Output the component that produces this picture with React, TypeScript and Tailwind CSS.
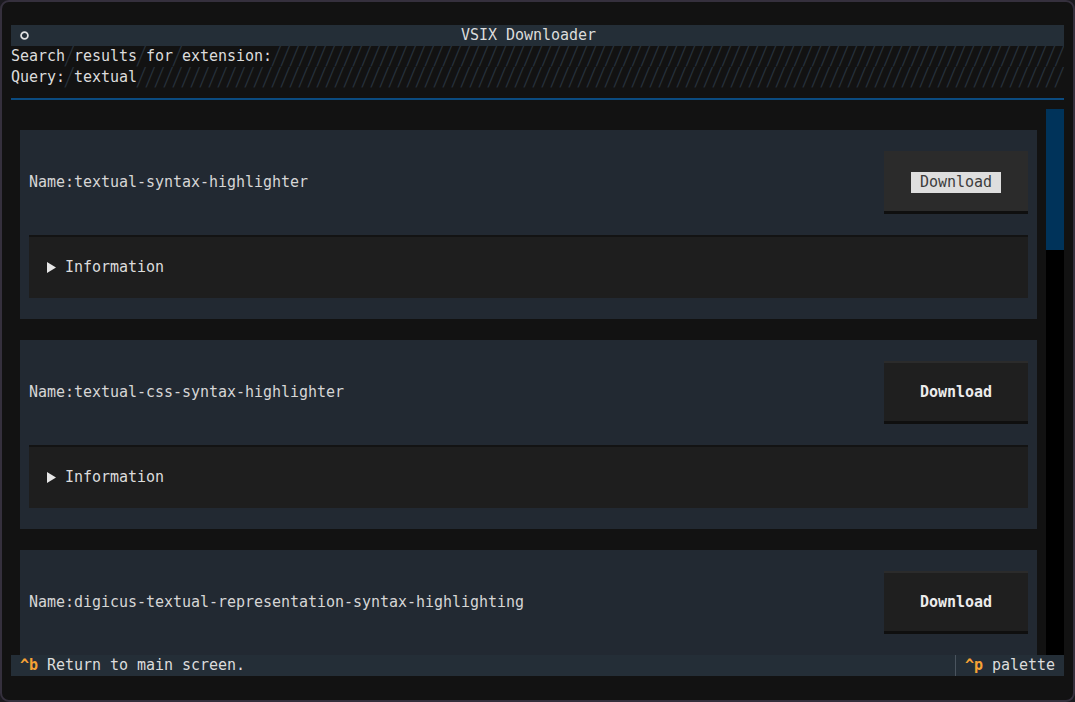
import React from 'react';

const COLS = 117;

function Slash({ count }: { count: number }) {
  return (
    <span className="inline-block origin-center scale-y-[1.25] text-[#27313b]">{'╱'.repeat(count)}</span>
  );
}

function HatchRow({ text }: { text: string }) {
  const words = text.split(' ');
  return (
    <div className="flex h-[21px] items-center overflow-hidden whitespace-pre">
      {words.map((w, i) => (
        <React.Fragment key={i}>
          {i > 0 && <Slash count={1} />}
          <span className="text-[#dcdcdc]">{w}</span>
        </React.Fragment>
      ))}
      <Slash count={COLS - text.length} />
    </div>
  );
}

function DownloadButton({ focused }: { focused?: boolean }) {
  if (focused) {
    return (
      <button className="flex h-[63px] w-[144px] shrink-0 items-center justify-center border-t-2 border-b-[3px] border-t-[#2b2b2b] border-b-[#0f0f0f] bg-[#2b2b2b]">
        <span className="bg-[#dedede] px-[9px] leading-[21px] text-[#3c3c3c]">Download</span>
      </button>
    );
  }
  return (
    <button className="flex h-[63px] w-[144px] shrink-0 items-center justify-center border-t-2 border-b-[3px] border-t-[#2b2b2b] border-b-[#0f0f0f] bg-[#1f1f1f]">
      <span className="font-semibold leading-[21px] text-[#ececec]">Download</span>
    </button>
  );
}

function ResultCard({ name, focused }: { name: string; focused?: boolean }) {
  return (
    <div className="shrink-0 bg-[#222932] px-[9px] py-[21px]">
      <div className="flex h-[63px] items-center justify-between">
        <span className="text-[#d6d6d6]">Name:{name}</span>
        <DownloadButton focused={focused} />
      </div>
      <div className="mt-[21px] flex h-[63px] items-center border-t-2 border-[#131313] bg-[#1e1e1e] pl-[18px] text-[#dcdcdc]">
        <svg width="9" height="11" viewBox="0 0 9 11" className="mr-[9px]">
          <path d="M0 0 L9 5.5 L0 11 Z" fill="#e6e6e6" />
        </svg>
        <span>Information</span>
      </div>
    </div>
  );
}

export default function App() {
  const results = [
    { name: 'textual-syntax-highlighter', focused: true },
    { name: 'textual-css-syntax-highlighter' },
    { name: 'digicus-textual-representation-syntax-highlighting' },
  ];

  return (
    <div className="h-[702px] w-[1075px] overflow-hidden bg-[#1b1a1f]">
      <div className="h-full w-full overflow-hidden rounded-[9px] border-2 border-[#35303d] bg-[#121212] px-[9px] pt-[23px] text-[15px] leading-[21px] tracking-[-0.03px] [font-family:'DejaVu_Sans_Mono',monospace]">
        {/* Header */}
        <div className="flex h-[21px] items-center bg-[#242e37]">
          <div className="flex w-[18px] justify-end">
            <svg width="9" height="9" viewBox="0 0 9 9" className="ml-[9px]">
              <circle cx="4.5" cy="4.5" r="3.4" fill="none" stroke="#e0e0e0" strokeWidth="1.8" />
            </svg>
          </div>
          <div className="flex-1 pr-[36px] text-center text-[#dcdcdc]">VSIX Downloader</div>
        </div>

        {/* Search info */}
        <HatchRow text="Search results for extension:" />
        <HatchRow text="Query: textual" />
        <div className="flex h-[21px] items-center">
          <div className="h-[2px] w-full bg-[#0b4b80]" />
        </div>

        {/* Results */}
        <div className="flex h-[546px] overflow-hidden">
          <div className="flex flex-1 flex-col gap-[21px] overflow-hidden pl-[9px] pr-[9px] pt-[21px]">
            {results.map((r, i) => (
              <ResultCard key={i} name={r.name} focused={r.focused} />
            ))}
          </div>
          <div className="flex w-[18px] flex-col bg-black">
            <div className="h-[141px] bg-[#00335a]" />
          </div>
        </div>

        {/* Footer */}
        <div className="flex h-[21px] items-center bg-[#242e37] whitespace-pre">
          <span className="pl-[9px] font-bold text-[#f5a235]">^b</span>
          <span className="text-[#dcdcdc]"> Return to main screen.</span>
          <div className="flex-1" />
          <div className="flex h-full items-center border-l border-[#4a545e] pl-[9px] pr-[9px]">
            <span className="font-bold text-[#f5a235]">^p</span>
            <span className="text-[#dcdcdc]"> palette</span>
          </div>
        </div>
      </div>
    </div>
  );
}
